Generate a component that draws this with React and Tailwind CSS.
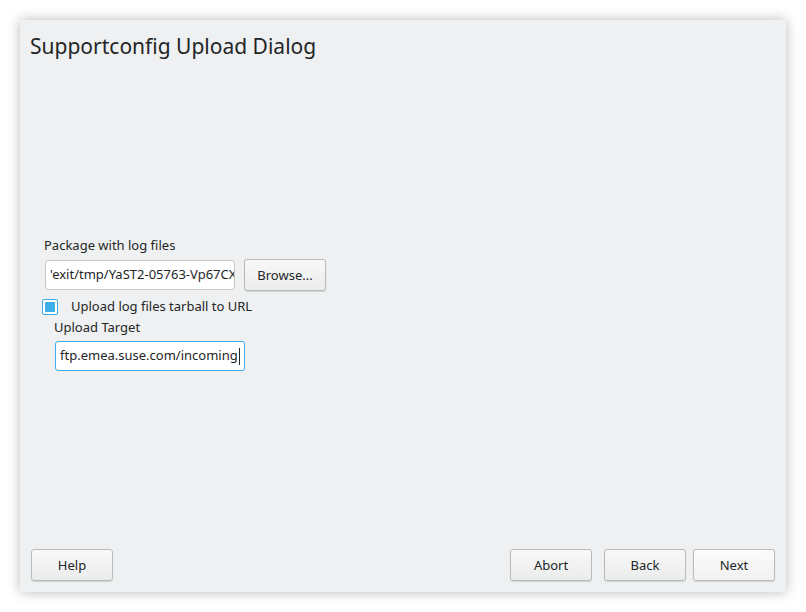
export default function App() {
  const font = { fontFamily: '"Noto Sans", "Open Sans", sans-serif' };
  const btn =
    "h-[32px] w-[82px] rounded-[3px] border border-[#b8babc] bg-gradient-to-b from-[#f8f8f8] to-[#ebecec] text-[13px] text-[#232627] shadow-[0_1px_1px_rgba(0,0,0,0.12)] flex items-center justify-center pt-[1px]";
  return (
    <div className="w-[806px] h-[612px] bg-white p-[20px]" style={font}>
      <div className="w-[766px] h-[572px] bg-[#eff0f1] shadow-[0_0_12px_rgba(0,0,0,0.28)] flex flex-col">
        <div className="pl-[10px] pt-[11px] text-[21px] leading-[30px] text-[#232627] h-[43px] flex items-start">
          <span>Supportconfig Upload Dialog</span>
        </div>
        <div className="flex-1 flex flex-col pl-[24px] pt-[173px]">
          <div className="text-[13px] leading-[18px] text-[#232627] h-[18px]">Package with log files</div>
          <div className="flex items-center gap-[9px] mt-[5px]">
            <div className="ml-[1px] w-[190px] h-[30px] bg-white border border-[#c4c6c8] rounded-[3px] overflow-hidden flex items-center pl-[4px]">
              <span className="whitespace-nowrap text-[13px] text-[#232627]">'exit/tmp/YaST2-05763-Vp67CX</span>
            </div>
            <div className={btn}>Browse...</div>
          </div>
          <div className="flex items-center mt-[7px] h-[18px]">
            <div className="w-[16px] h-[16px] ml-[-2px] rounded-[2px] border border-[#3daee9] bg-white flex items-center justify-center">
              <div className="w-[10px] h-[10px] bg-[#3daee9] rounded-[1px]" />
            </div>
            <span className="ml-[13px] text-[13px] text-[#232627]">Upload log files tarball to URL</span>
          </div>
          <div className="pl-[10px] mt-[2px] text-[13px] leading-[18px] text-[#232627]">Upload Target</div>
          <div className="ml-[11px] mt-[5px] w-[190px] h-[30px] bg-white border border-[#3daee9] rounded-[3px] overflow-hidden flex items-center pl-[4px]">
            <span className="whitespace-nowrap text-[13px] text-[#232627]">ftp.emea.suse.com/incoming</span>
            <span className="w-[1px] h-[17px] bg-[#232627] ml-[1px]" />
          </div>
        </div>
        <div className="flex items-center px-[11px] pb-[11px]">
          <div className={btn}>Help</div>
          <div className="flex-1" />
          <div className={btn}>Abort</div>
          <div className={btn + " ml-[12px]"}>Back</div>
          <div className={btn + " ml-[7px] from-[#fbfbfb] to-[#f1f1f2]"}>Next</div>
        </div>
      </div>
    </div>
  );
}
